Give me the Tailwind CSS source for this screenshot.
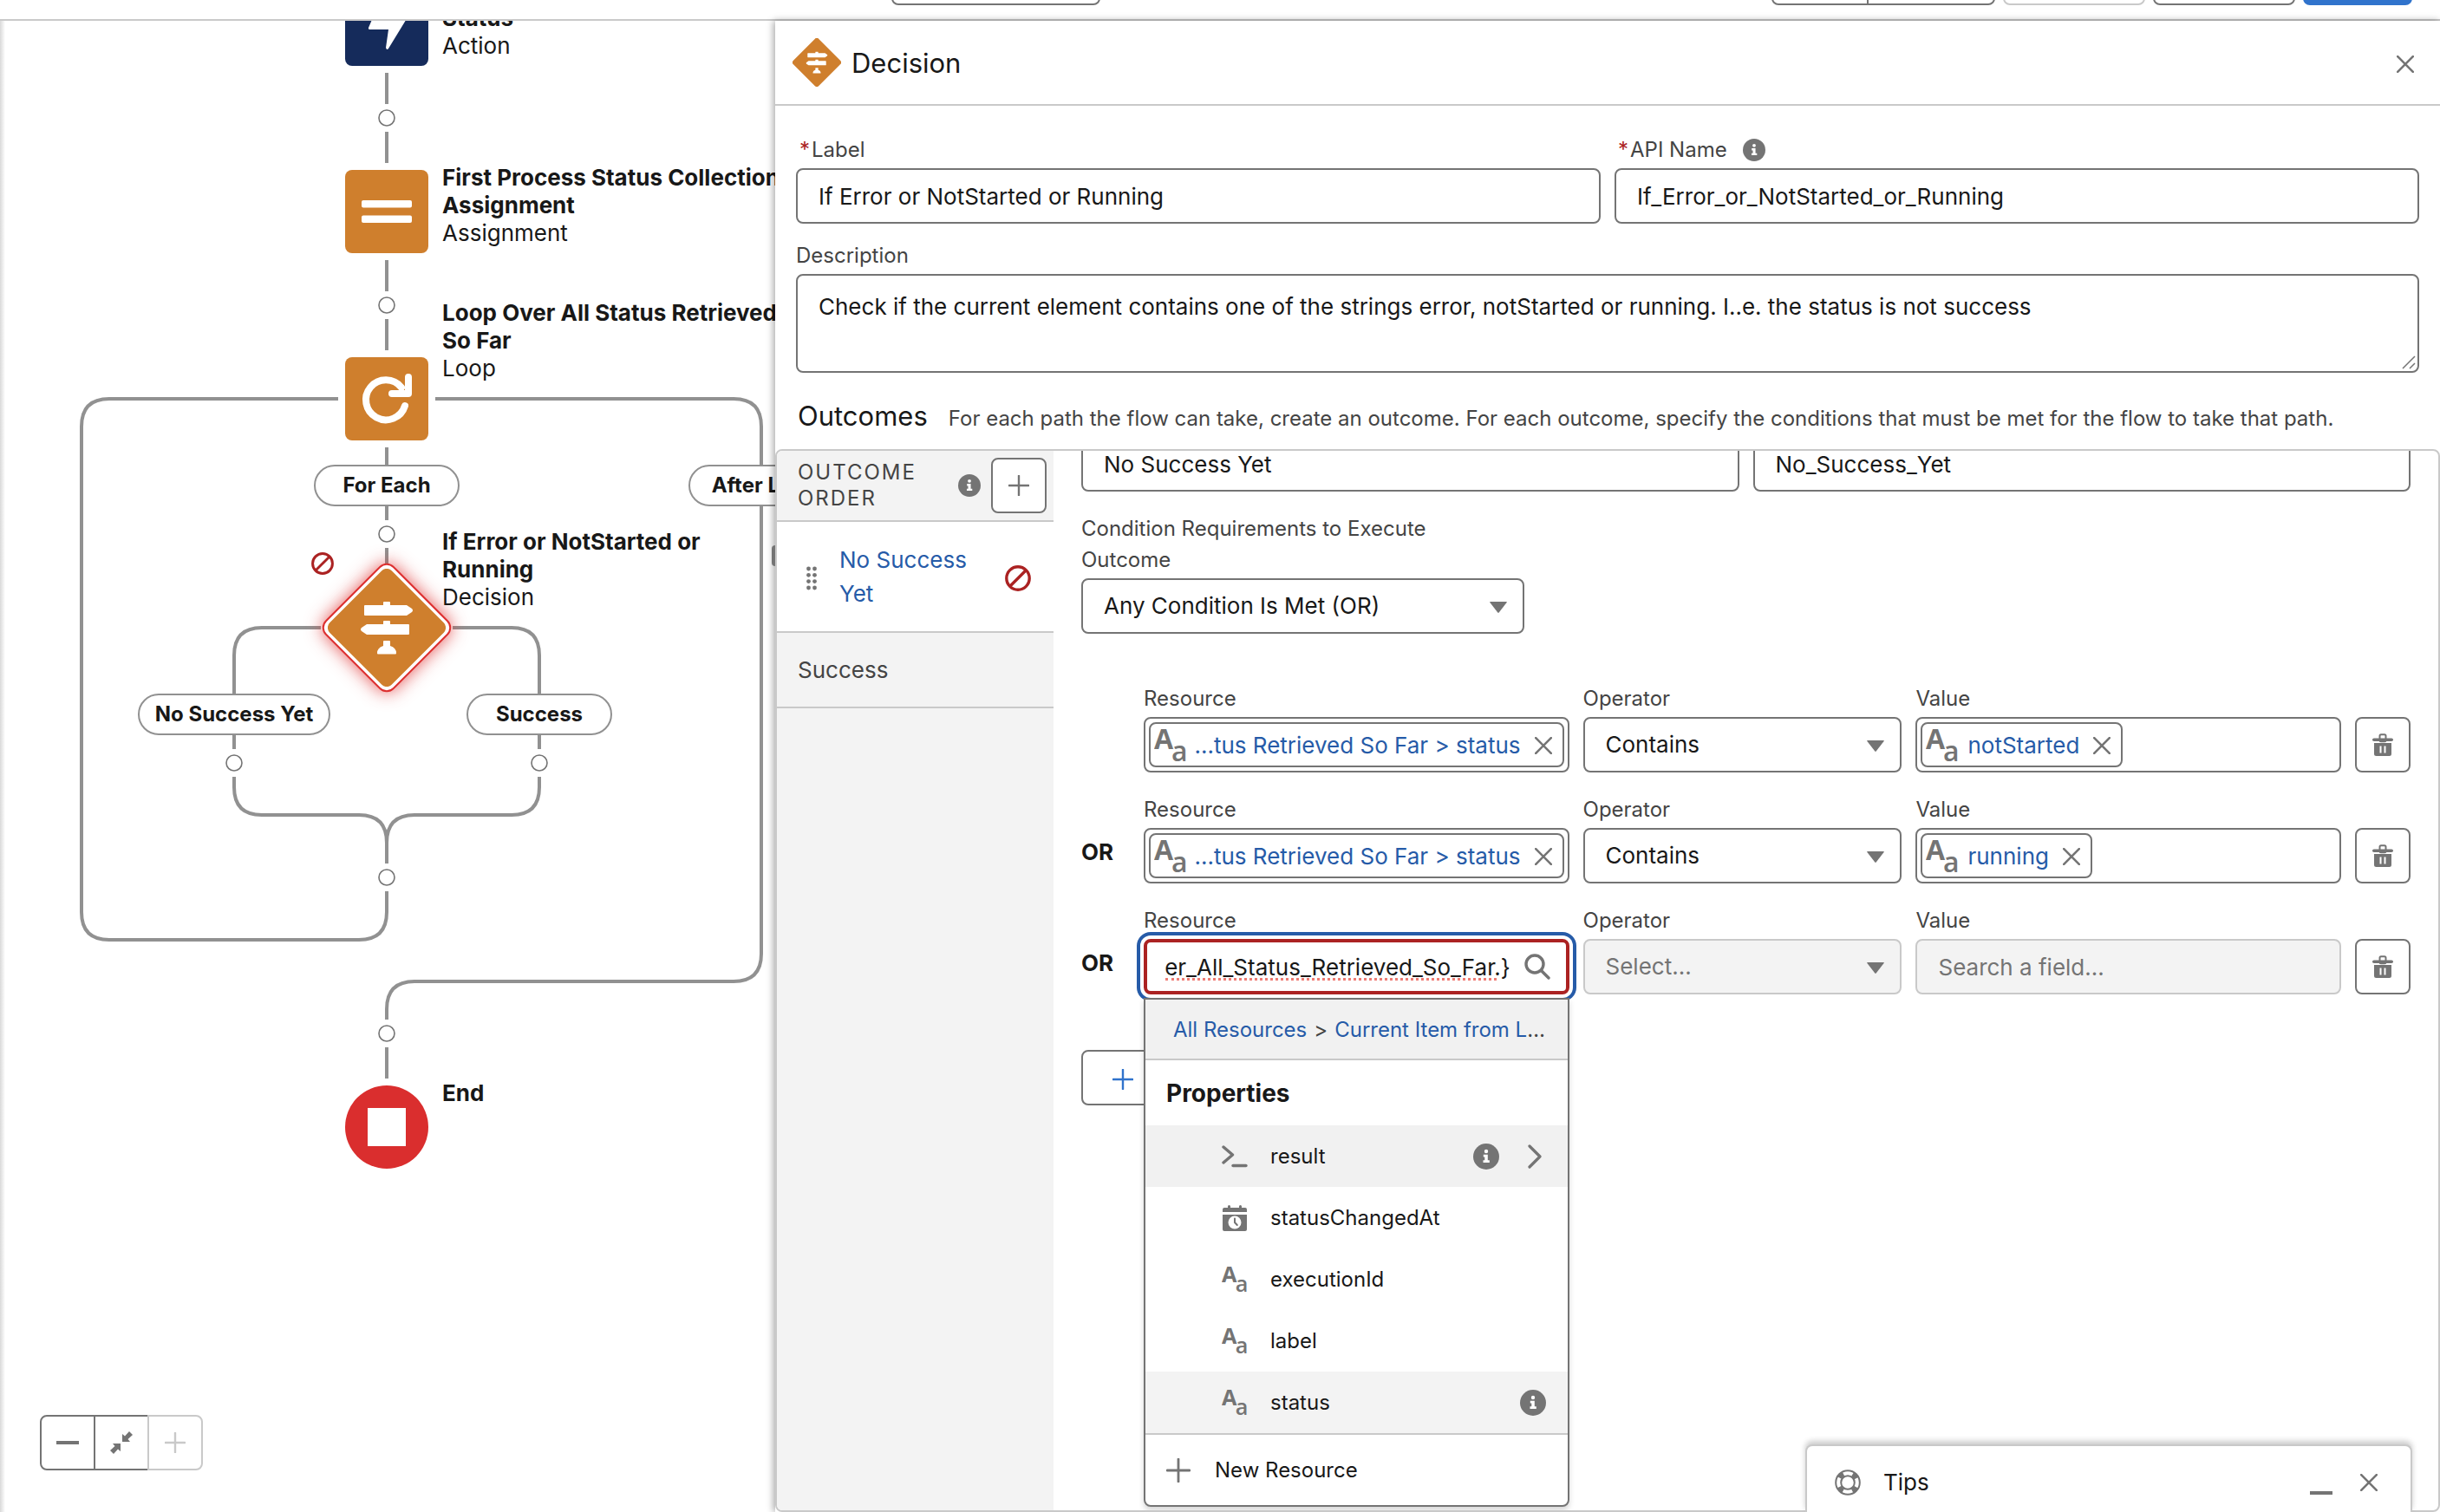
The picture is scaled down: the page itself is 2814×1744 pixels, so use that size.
<!DOCTYPE html>
<html lang="en">
<head>
<meta charset="utf-8">
<title>Flow Builder – Decision</title>
<script src="https://cdn.jsdelivr.net/npm/@tailwindcss/browser@4"></script>
</head>
<body class="h-screen flex flex-col overflow-hidden bg-white font-['Inter',sans-serif] text-[26px] leading-[32px] text-[#181818] relative">

<!-- Icon sprite -->
<svg class="hidden" aria-hidden="true">
  <symbol id="i-decision" viewBox="-68 -68 136 136">
    <rect x="-50.5" y="-50.5" width="101" height="101" rx="8" transform="rotate(45)" fill="#cf7f2d"/>
    <g fill="#fff">
      <path d="M-25-26H-4V-29Q-4-30-3-30H3Q4-30 4-29V-26H23L29-22Q31-20 29-18L23-14H-25Q-26-14-26-15V-25Q-26-26-25-26Z"/>
      <path d="M25-4H4V-7Q4-8 3-8H-3Q-4-8-4-7V-4H-23L-29 0Q-31 2-29 4L-23 8H25Q26 8 26 7V-3Q26-4 25-4Z"/>
      <path d="M-4 16Q-4 15-3 15H3Q4 15 4 16V21Q11 23 11 29.5Q11 30.500 10 30.500H-10Q-11 30.500-11 29.500Q-11 23-4 21Z"/>
    </g>
  </symbol>
  <symbol id="i-info" viewBox="0 0 30 30">
    <circle cx="15" cy="15" r="15" fill="#747474"/>
    <circle cx="15" cy="9" r="2.200" fill="#fff"/>
    <path d="M11.800 12.800h5v6.400H18.800v2.800h-7.300v-2.800H13.300v-3.600H11.800z" fill="#fff"/>
  </symbol>
  <symbol id="i-plus" viewBox="0 0 28 28"><path d="M14 1V27M1 14H27" stroke="currentColor" stroke-width="2.800" stroke-linecap="round" fill="none"/></symbol>
  <symbol id="i-close" viewBox="0 0 20 20"><path d="M1.200 1.200L18.800 18.800M18.800 1.200L1.200 18.800" stroke="currentColor" stroke-width="2.600" stroke-linecap="round" fill="none"/></symbol>
  <symbol id="i-ban" viewBox="0 0 30 30"><circle cx="15" cy="15" r="13.200" fill="none" stroke="#ab2222" stroke-width="3.400"/><path d="M6 24L24 6" stroke="#ab2222" stroke-width="3.400"/></symbol>
  <symbol id="i-down" viewBox="0 0 20 13"><path d="M.8 0H19.200Q20.300 0 19.600 1L10.700 12.500Q10 13.300 9.300 12.500L.4 1Q-.3 0 .8 0Z" fill="#747474"/></symbol>
  <symbol id="i-text" viewBox="0 0 38 44"><g fill="#747474" font-family="Open Sans" font-weight="700" font-size="32"><text x="0" y="26">A</text><text x="20" y="40" font-weight="600">a</text></g></symbol>
  <symbol id="i-trash" viewBox="0 0 24 26">
    <rect x="8.500" y="1.200" width="7" height="8" rx="1.500" fill="none" stroke="#747474" stroke-width="2"/>
    <rect x="0" y="5.500" width="24" height="3.600" rx="1.800" fill="#747474"/>
    <path fill-rule="evenodd" d="M2 11H22V23.500Q22 26 19.500 26H4.500Q2 26 2 23.500ZM8.500 14.500V22.500H10.500V14.500ZM13.500 14.500V22.500H15.500V14.500Z" fill="#747474"/>
  </symbol>
  <symbol id="i-calendar" viewBox="0 0 28 30">
    <path d="M0 8V5Q0 3 2 3H6V1.500Q6 0 7.500 0T9 1.500V3H19V1.500Q19 0 20.500 0T22 1.500V3H26Q28 3 28 5V8Z" fill="#747474"/>
    <path d="M0 11H28V28Q28 30 26 30H2Q0 30 0 28Z" fill="#747474"/>
    <circle cx="14" cy="20" r="7.500" fill="#fff"/><path d="M14 15.500V20L16.800 23" stroke="#747474" stroke-width="2" fill="none" stroke-linecap="round"/>
  </symbol>
</svg>

<!-- Toolbar, scrolled so that only the lower edge of its buttons shows -->
<header class="h-6 shrink-0 flex items-end pb-4 border-b-2 border-[#c9c9c9] pl-[1028px] pr-8">
  <button aria-label="View mode" class="h-16 w-[241px] shrink-0 rounded-lg border-2 border-[#747474]"></button>
  <div class="ml-auto flex gap-[9px] shrink-0">
    <div class="flex">
      <button aria-label="Run" class="h-16 w-28 rounded-l-lg border-2 border-[#747474]"></button>
      <button aria-label="Debug" class="h-16 w-[148px] -ml-0.5 rounded-r-lg border-2 border-[#747474]"></button>
    </div>
    <button aria-label="Activate" class="h-16 w-[164px] rounded-lg border-2 border-[#c9c9c9]"></button>
    <button aria-label="Save As" class="h-16 w-[164px] rounded-lg border-2 border-[#747474]"></button>
    <button aria-label="Save" class="h-16 w-[126px] rounded-lg bg-[#3073cc]"></button>
  </div>
</header>

<main class="flex-1 min-h-0 flex">

  <!-- Flow canvas -->
  <section aria-label="Flow canvas" class="w-[894px] shrink-0 relative overflow-hidden">
    <div class="absolute inset-x-0 -top-6 bottom-0">
      <svg class="absolute left-0 top-0" width="1000" height="1400" viewBox="0 0 1000 1400" fill="none" aria-hidden="true">
        <g stroke="#919191" stroke-width="4">
          <path d="M446 84V120M446 152V188M446 300V336M446 368V404M446 516V536M446 584V600M446 632V652"/>
          <path d="M390 460H126Q94 460 94 492V1052Q94 1084 126 1084H414Q446 1084 446 1052V1028"/>
          <path d="M502 460H846Q878 460 878 492V1100Q878 1132 846 1132H478Q446 1132 446 1164V1176M446 1208V1244"/>
          <path d="M370 724H302Q270 724 270 756V800M270 848V864M270 896V908Q270 940 302 940H414Q446 940 446 972V996"/>
          <path d="M522 724H590Q622 724 622 756V800M622 848V864M622 896V908Q622 940 590 940H478Q446 940 446 972"/>
        </g>
        <g stroke="#747474" stroke-width="1.600" fill="#fff">
          <circle cx="446" cy="136" r="9"/><circle cx="446" cy="352" r="9"/><circle cx="446" cy="616" r="9"/>
          <circle cx="270" cy="880" r="9"/><circle cx="622" cy="880" r="9"/><circle cx="446" cy="1012" r="9"/><circle cx="446" cy="1192" r="9"/>
        </g>
      </svg>

      <button aria-label="Action" class="absolute left-[398px] top-[-20px] size-24 rounded-lg bg-[#152b5b]">
        <svg viewBox="0 0 96 96" class="size-24"><path d="M39 24L27 52Q26.500 54 28.500 54H50L47 75Q48 78.500 50 76L72 40H56L62 24Z" fill="#fff"/></svg>
      </button>
      <p class="absolute left-[510px] top-[5px] w-[400px]"><b>Status</b><br>Action</p>

      <button aria-label="Assignment" class="absolute left-[398px] top-[196px] size-24 rounded-lg bg-[#cf7f2d]">
        <svg viewBox="0 0 96 96" class="size-24"><rect x="19" y="35" width="58" height="8.500" rx="2" fill="#fff"/><rect x="19" y="52.500" width="58" height="8.500" rx="2" fill="#fff"/></svg>
      </button>
      <p class="absolute left-[510px] top-[189px] w-[420px]"><b>First Process Status Collection Assignment</b><br>Assignment</p>

      <button aria-label="Loop" class="absolute left-[398px] top-[412px] size-24 rounded-lg bg-[#cf7f2d]">
        <svg viewBox="0 0 96 96" class="size-24" fill="none" stroke="#fff" stroke-width="8" stroke-linecap="round" stroke-linejoin="round"><path d="M69 56A23 23 0 1 1 65 35"/><path d="M73 23V42H54"/></svg>
      </button>
      <p class="absolute left-[510px] top-[345px] w-[410px]"><b>Loop Over All Status Retrieved So Far</b><br>Loop</p>

      <button class="absolute left-[362px] top-[536px] w-[168px] h-12 rounded-full border-2 border-[#919191] bg-white text-2xl font-bold">For Each</button>
      <button class="absolute left-[794px] top-[536px] w-[168px] h-12 rounded-full border-2 border-[#919191] bg-white text-2xl font-bold">After Last</button>

      <div class="absolute left-[390px] top-[668px] size-28 rotate-45 rounded-xl border-2 border-[#dd2f2f] bg-white shadow-[0_0_20px_rgba(221,47,47,0.800)]"></div>
      <button aria-label="Decision" class="absolute left-[378px] top-[656px] size-[136px]"><svg class="size-[136px]"><use href="#i-decision"/></svg></button>
      <svg class="absolute left-[359px] top-[637px] size-[26px]"><use href="#i-ban"/></svg>
      <p class="absolute left-[510px] top-[609px] w-[360px]"><b>If Error or NotStarted or Running</b><br>Decision</p>

      <button class="absolute left-[159px] top-[800px] w-[222px] h-12 rounded-full border-2 border-[#919191] bg-white text-2xl font-bold">No Success Yet</button>
      <button class="absolute left-[538px] top-[800px] w-[168px] h-12 rounded-full border-2 border-[#919191] bg-white text-2xl font-bold">Success</button>

      <button aria-label="End" class="absolute left-[398px] top-[1252px] size-24 rounded-full bg-[#da2e2e] flex items-center justify-center"><span class="size-11 bg-white"></span></button>
      <p class="absolute left-[510px] top-[1245px] font-bold">End</p>
    </div>

    <div class="absolute left-[46px] bottom-12 flex text-[#747474]">
      <button aria-label="Zoom out" class="size-16 flex items-center justify-center rounded-l-lg border-2 border-[#747474] bg-white"><span class="w-[26px] h-1 bg-[#747474]"></span></button>
      <button aria-label="Zoom to fit" class="size-16 -ml-0.5 flex items-center justify-center border-2 border-[#747474] bg-white">
        <svg viewBox="0 0 26 26" class="size-[26px]" fill="currentColor"><path d="M14 12V3L17 5.500L22 0L26 4L20.500 9L23 12ZM12 14V23L9 20.500L4 26L0 22L5.500 17L3 14Z"/></svg>
      </button>
      <button aria-label="Zoom in" disabled class="size-16 -ml-0.5 flex items-center justify-center rounded-r-lg border-2 border-[#c9c9c9] bg-white text-[#c9c9c9]"><svg class="size-6"><use href="#i-plus"/></svg></button>
    </div>
    <div class="absolute inset-y-0 left-0 w-1.5 bg-linear-to-r from-black/15 to-transparent"></div>
  </section>

  <!-- Decision editor panel -->
  <section aria-label="Decision" class="flex-1 min-w-0 relative flex flex-col bg-white shadow-[-2px_0_8px_rgba(0,0,0,0.350)]">
    <div class="absolute -left-1 top-[605px] w-1 h-6 rounded-l-sm bg-[#747474]"></div>
    <div class="h-[98px] shrink-0 flex items-center pl-5 pr-[30px] border-b-2 border-[#c9c9c9]">
      <svg class="size-14"><use href="#i-decision"/></svg>
      <h1 class="ml-3 pt-0.5 text-[31px] leading-10">Decision</h1>
      <button aria-label="Close" class="ml-auto pt-1 text-[#747474]"><svg class="size-5"><use href="#i-close"/></svg></button>
    </div>

    <div class="shrink-0 px-6">
      <div class="grid grid-cols-2 gap-4 pt-8">
        <div>
          <div class="h-9 mb-1 pt-0.5 flex items-center pl-1 gap-0.5 text-2xl text-[#444]"><span class="text-[#ab2222]">*</span><label for="f-label">Label</label></div>
          <input id="f-label" value="If Error or NotStarted or Running" class="w-full h-16 rounded-lg border-2 border-[#747474] px-6">
        </div>
        <div>
          <div class="h-9 mb-1 pt-0.5 flex items-center pl-1 gap-0.5 text-2xl text-[#444]"><span class="text-[#ab2222]">*</span><label for="f-api">API Name</label><svg class="ml-4 size-[26px]"><use href="#i-info"/></svg></div>
          <input id="f-api" value="If_Error_or_NotStarted_or_Running" class="w-full h-16 rounded-lg border-2 border-[#747474] px-6">
        </div>
      </div>
      <label for="f-desc" class="block mt-[19px] mb-[3px] text-2xl leading-9 text-[#444]">Description</label>
      <div class="relative">
        <textarea id="f-desc" class="block w-full h-[114px] resize-none rounded-lg border-2 border-[#747474] px-6 py-4 leading-[39px]">Check if the current element contains one of the strings error, notStarted or running. I..e. the status is not success</textarea>
        <svg viewBox="0 0 16 16" class="absolute right-1 bottom-1 size-4 pointer-events-none" stroke="#747474" stroke-width="1.500"><path d="M1 15L15 1M9 15L15 9"/></svg>
      </div>
      <div class="h-[88px] pt-[11px] flex items-center">
        <div class="flex items-baseline gap-6 pl-0.5">
          <h2 class="text-[31px] leading-10">Outcomes</h2>
          <p class="text-2xl text-[#444]">For each path the flow can take, create an outcome. For each outcome, specify the conditions that must be met for the flow to take that path.</p>
        </div>
      </div>
    </div>

    <div class="flex-1 min-h-0 flex overflow-hidden rounded-lg border-2 border-[#c9c9c9]">
      <!-- Outcome list -->
      <nav aria-label="Outcome order" class="w-[319px] shrink-0 bg-[#f3f3f3] text-[#444]">
        <div class="h-[82px] flex items-center pl-6 pr-2 border-b-2 border-[#c9c9c9]">
          <h3 class="flex-1 text-2xl leading-[30px] tracking-[2px] uppercase">Outcome Order</h3>
          <svg class="size-[26px] mr-3"><use href="#i-info"/></svg>
          <button aria-label="Add outcome" class="size-16 flex items-center justify-center rounded-lg border-2 border-[#747474] bg-white text-[#747474]"><svg class="size-6"><use href="#i-plus"/></svg></button>
        </div>
        <div class="h-32 flex items-center pt-1 pl-[34px] pr-[26px] border-b-2 border-[#c9c9c9] bg-white">
          <svg viewBox="0 0 12 28" class="w-3 h-7 shrink-0" fill="#747474"><circle cx="2.500" cy="3" r="2.400"/><circle cx="9.500" cy="3" r="2.400"/><circle cx="2.500" cy="10.300" r="2.400"/><circle cx="9.500" cy="10.300" r="2.400"/><circle cx="2.500" cy="17.600" r="2.400"/><circle cx="9.500" cy="17.600" r="2.400"/><circle cx="2.500" cy="25" r="2.400"/><circle cx="9.500" cy="25" r="2.400"/></svg>
          <a href="#" class="w-[160px] ml-[26px] pb-1 leading-[39px] text-[#265ba8]">No Success Yet</a>
          <svg class="size-[30px] ml-auto"><use href="#i-ban"/></svg>
        </div>
        <a href="#" class="h-[87px] flex items-center pl-6 border-b-2 border-[#c9c9c9]">Success</a>
      </nav>

      <!-- Outcome details -->
      <div class="flex-1 min-w-0 pl-8 pr-8 -mt-[17px]">
        <div class="grid grid-cols-2 gap-4">
          <input aria-label="Outcome label" value="No Success Yet" class="w-full h-16 rounded-lg border-2 border-[#747474] px-6">
          <input aria-label="Outcome API name" value="No_Success_Yet" class="w-full h-16 rounded-lg border-2 border-[#747474] px-6">
        </div>

        <div class="mt-[25px] w-1/3">
          <label for="f-req" class="block pr-10 mb-[3px] text-2xl leading-9 text-[#444]">Condition Requirements to Execute Outcome</label>
          <div class="relative">
            <select id="f-req" class="w-full h-16 appearance-none rounded-lg border-2 border-[#747474] px-6"><option>Any Condition Is Met (OR)</option></select>
            <svg class="absolute right-5 top-[27px] w-5 h-[13px] pointer-events-none"><use href="#i-down"/></svg>
          </div>
        </div>

        <div class="mt-[60px] flex flex-col gap-7">
          <div class="grid grid-cols-[56px_4fr_3fr_4fr_64px] gap-x-4 items-end">
            <span></span>
            <div role="group" aria-labelledby="r1" class="min-w-0">
              <div id="r1" class="mb-1.5 text-2xl leading-[30px] text-[#444]">Resource</div>
              <div class="h-16 rounded-lg border-2 border-[#747474] p-1">
                <div class="h-[52px] flex items-center rounded-lg border-2 border-[#747474] pl-1 pr-3 pt-0.5 text-[#265ba8]"><svg class="w-[38px] h-11 shrink-0"><use href="#i-text"/></svg><a href="#" class="ml-auto mr-4 whitespace-nowrap">...tus Retrieved So Far &gt; status</a><button aria-label="Remove" class="text-[#747474]"><svg class="size-5"><use href="#i-close"/></svg></button></div>
              </div>
            </div>
            <div>
              <label for="o1" class="block mb-1.5 text-2xl leading-[30px] text-[#444]">Operator</label>
              <div class="relative"><select id="o1" class="w-full h-16 appearance-none rounded-lg border-2 border-[#747474] px-6"><option>Contains</option></select><svg class="absolute right-5 top-[27px] w-5 h-[13px] pointer-events-none"><use href="#i-down"/></svg></div>
            </div>
            <div role="group" aria-labelledby="v1">
              <div id="v1" class="mb-1.5 text-2xl leading-[30px] text-[#444]">Value</div>
              <div class="h-16 flex rounded-lg border-2 border-[#747474] p-1">
                <div class="h-[52px] flex items-center rounded-lg border-2 border-[#747474] pl-1 pr-3 pt-0.5 text-[#265ba8]"><svg class="w-[38px] h-11 shrink-0"><use href="#i-text"/></svg><a href="#" class="ml-2.5 mr-4">notStarted</a><button aria-label="Remove" class="text-[#747474]"><svg class="size-5"><use href="#i-close"/></svg></button></div>
              </div>
            </div>
            <button aria-label="Delete condition" class="size-16 flex items-center justify-center rounded-lg border-2 border-[#747474]"><svg class="w-6 h-[26px]"><use href="#i-trash"/></svg></button>
          </div>

          <div class="grid grid-cols-[56px_4fr_3fr_4fr_64px] gap-x-4 items-end">
            <b class="pb-5">OR</b>
            <div role="group" aria-labelledby="r2" class="min-w-0">
              <div id="r2" class="mb-1.5 text-2xl leading-[30px] text-[#444]">Resource</div>
              <div class="h-16 rounded-lg border-2 border-[#747474] p-1">
                <div class="h-[52px] flex items-center rounded-lg border-2 border-[#747474] pl-1 pr-3 pt-0.5 text-[#265ba8]"><svg class="w-[38px] h-11 shrink-0"><use href="#i-text"/></svg><a href="#" class="ml-auto mr-4 whitespace-nowrap">...tus Retrieved So Far &gt; status</a><button aria-label="Remove" class="text-[#747474]"><svg class="size-5"><use href="#i-close"/></svg></button></div>
              </div>
            </div>
            <div>
              <label for="o2" class="block mb-1.5 text-2xl leading-[30px] text-[#444]">Operator</label>
              <div class="relative"><select id="o2" class="w-full h-16 appearance-none rounded-lg border-2 border-[#747474] px-6"><option>Contains</option></select><svg class="absolute right-5 top-[27px] w-5 h-[13px] pointer-events-none"><use href="#i-down"/></svg></div>
            </div>
            <div role="group" aria-labelledby="v2">
              <div id="v2" class="mb-1.5 text-2xl leading-[30px] text-[#444]">Value</div>
              <div class="h-16 flex rounded-lg border-2 border-[#747474] p-1">
                <div class="h-[52px] flex items-center rounded-lg border-2 border-[#747474] pl-1 pr-3 pt-0.5 text-[#265ba8]"><svg class="w-[38px] h-11 shrink-0"><use href="#i-text"/></svg><a href="#" class="ml-2.5 mr-4">running</a><button aria-label="Remove" class="text-[#747474]"><svg class="size-5"><use href="#i-close"/></svg></button></div>
              </div>
            </div>
            <button aria-label="Delete condition" class="size-16 flex items-center justify-center rounded-lg border-2 border-[#747474]"><svg class="w-6 h-[26px]"><use href="#i-trash"/></svg></button>
          </div>

          <div class="grid grid-cols-[56px_4fr_3fr_4fr_64px] gap-x-4 items-end">
            <b class="pb-5">OR</b>
            <div class="relative min-w-0">
              <label for="r3" class="block mb-1.5 text-2xl leading-[30px] text-[#444]">Resource</label>
              <div class="h-16 flex items-center rounded-lg border-4 border-[#ab2222] bg-white pl-[21px] pr-[18px] shadow-[0_0_0_4px_#fff,0_0_0_8px_#265ba8]">
                <div class="relative min-w-0 flex-1">
                  <input id="r3" spellcheck="false" value="{!Loop_Over_All_Status_Retrieved_So_Far.}" class="block w-full h-12 outline-none">
                  <span class="absolute left-0 right-4 bottom-2 border-b-3 border-dotted border-[#ee7c74] pointer-events-none"></span>
                </div>
                <svg viewBox="0 0 30 30" class="ml-4 size-[30px] shrink-0" fill="none" stroke="#747474" stroke-width="3.400" stroke-linecap="round"><circle cx="12" cy="12" r="10"/><path d="M19.500 19.500L28 28"/></svg>
              </div>
              <!-- Resource menu -->
              <div class="absolute z-10 inset-x-0 top-full mt-1 rounded-b-lg border-2 border-[#747474] bg-white shadow-[0_4px_6px_rgba(0,0,0,0.160)] text-2xl">
                <div class="h-[70px] flex items-center pl-8 pr-5 bg-[#f1f1f1] border-b-2 border-[#c9c9c9]"><p class="truncate pt-0.5 text-[#444]"><a href="#" class="text-[#265ba8]">All Resources</a><span class="px-2">&gt;</span><a href="#" class="text-[#265ba8]">Current Item from Loop Over All Status</a></p></div>
                <h4 class="h-[75px] flex items-center pl-6 pt-0.5 text-[28px] font-bold">Properties</h4>
                <ul>
                  <li class="h-[71px] flex items-center pl-[88px] pr-[30px] bg-[#f1f1f1]"><svg viewBox="0 0 30 26" class="w-[30px] h-[26px]" fill="none" stroke="#747474" stroke-linecap="round" stroke-linejoin="round" stroke-width="3.400"><path d="M2 2L12.500 11L2 20"/><path d="M13 23.500H28"/></svg><span class="ml-[26px]">result</span><svg class="ml-auto mr-[33px] size-[30px]"><use href="#i-info"/></svg><svg viewBox="0 0 16 28" class="w-4 h-7" fill="none" stroke="#747474" stroke-width="3.200" stroke-linecap="round" stroke-linejoin="round"><path d="M2 2L14 14L2 26"/></svg></li>
                  <li class="h-[71px] flex items-center pl-[88px] pr-[25px]"><svg class="w-[30px] h-[30px]"><use href="#i-calendar"/></svg><span class="ml-[26px]">statusChangedAt</span></li>
                  <li class="h-[71px] flex items-center pl-[88px] pr-[25px]"><svg class="w-[30px] h-9"><use href="#i-text"/></svg><span class="ml-[26px]">executionId</span></li>
                  <li class="h-[71px] flex items-center pl-[88px] pr-[25px]"><svg class="w-[30px] h-9"><use href="#i-text"/></svg><span class="ml-[26px]">label</span></li>
                  <li class="h-[71px] flex items-center pl-[88px] pr-[25px] bg-[#f3f3f3]"><svg class="w-[30px] h-9"><use href="#i-text"/></svg><span class="ml-[26px]">status</span><svg class="ml-auto size-[30px]"><use href="#i-info"/></svg></li>
                </ul>
                <button class="w-full h-[83px] flex items-center pl-6 border-t-2 border-[#c9c9c9] text-[#181818]"><svg class="size-7 text-[#747474]"><use href="#i-plus"/></svg><span class="ml-7">New Resource</span></button>
              </div>
            </div>
            <div>
              <label for="o3" class="block mb-1.5 text-2xl leading-[30px] text-[#444]">Operator</label>
              <div class="relative"><select id="o3" disabled class="w-full h-16 appearance-none rounded-lg border-2 border-[#c9c9c9] bg-[#f3f3f3] px-6 text-[#747474] opacity-100"><option>Select...</option></select><svg class="absolute right-5 top-[27px] w-5 h-[13px] pointer-events-none"><use href="#i-down"/></svg></div>
            </div>
            <div>
              <label for="v3" class="block mb-1.5 text-2xl leading-[30px] text-[#444]">Value</label>
              <input id="v3" disabled placeholder="Search a field..." class="w-full h-16 rounded-lg border-2 border-[#c9c9c9] bg-[#f3f3f3] px-6 placeholder:text-[#747474]">
            </div>
            <button aria-label="Delete condition" class="size-16 flex items-center justify-center rounded-lg border-2 border-[#747474]"><svg class="w-6 h-[26px]"><use href="#i-trash"/></svg></button>
          </div>
        </div>

        <button aria-label="Add condition" class="mt-16 w-[270px] h-16 flex items-center pl-[34px] rounded-lg border-2 border-[#747474] text-[#3073cc]"><svg class="size-6 mt-1"><use href="#i-plus"/></svg></button>
      </div>
    </div>
  </section>
</main>

<!-- Docked tips bar -->
<aside class="absolute bottom-0 right-8 w-[700px] h-[78px] z-20 flex items-center pl-8 pr-[38px] pt-2 rounded-t-lg border-2 border-b-0 border-[#c9c9c9] bg-white shadow-[0_-4px_6px_rgba(0,0,0,0.200)]">
  <svg viewBox="0 0 30 30" class="size-[30px]" fill="none" stroke="#747474"><circle cx="15" cy="15" r="13.800" stroke-width="2"/><circle cx="15" cy="15" r="7.800" stroke-width="2"/><circle cx="15" cy="15" r="11" stroke-width="6" stroke-dasharray="6.300 10.980" stroke-dashoffset="-5.490"/></svg>
  <h2 class="ml-[26px]">Tips</h2>
  <button aria-label="Minimize" class="ml-auto w-[26px] h-5 flex items-end"><span class="w-full h-1 bg-[#747474] translate-y-1"></span></button>
  <button aria-label="Close tips" class="ml-8 text-[#747474]"><svg class="size-5"><use href="#i-close"/></svg></button>
</aside>

<script>
  // Keep the end of the merge-field reference in view
  const field = document.getElementById('r3');
  const showEnd = () => { field.scrollLeft = 9999; };
  showEnd();
  window.addEventListener('load', () => { showEnd(); requestAnimationFrame(showEnd); });
  document.fonts.ready.then(showEnd);
</script>
</body>
</html>
